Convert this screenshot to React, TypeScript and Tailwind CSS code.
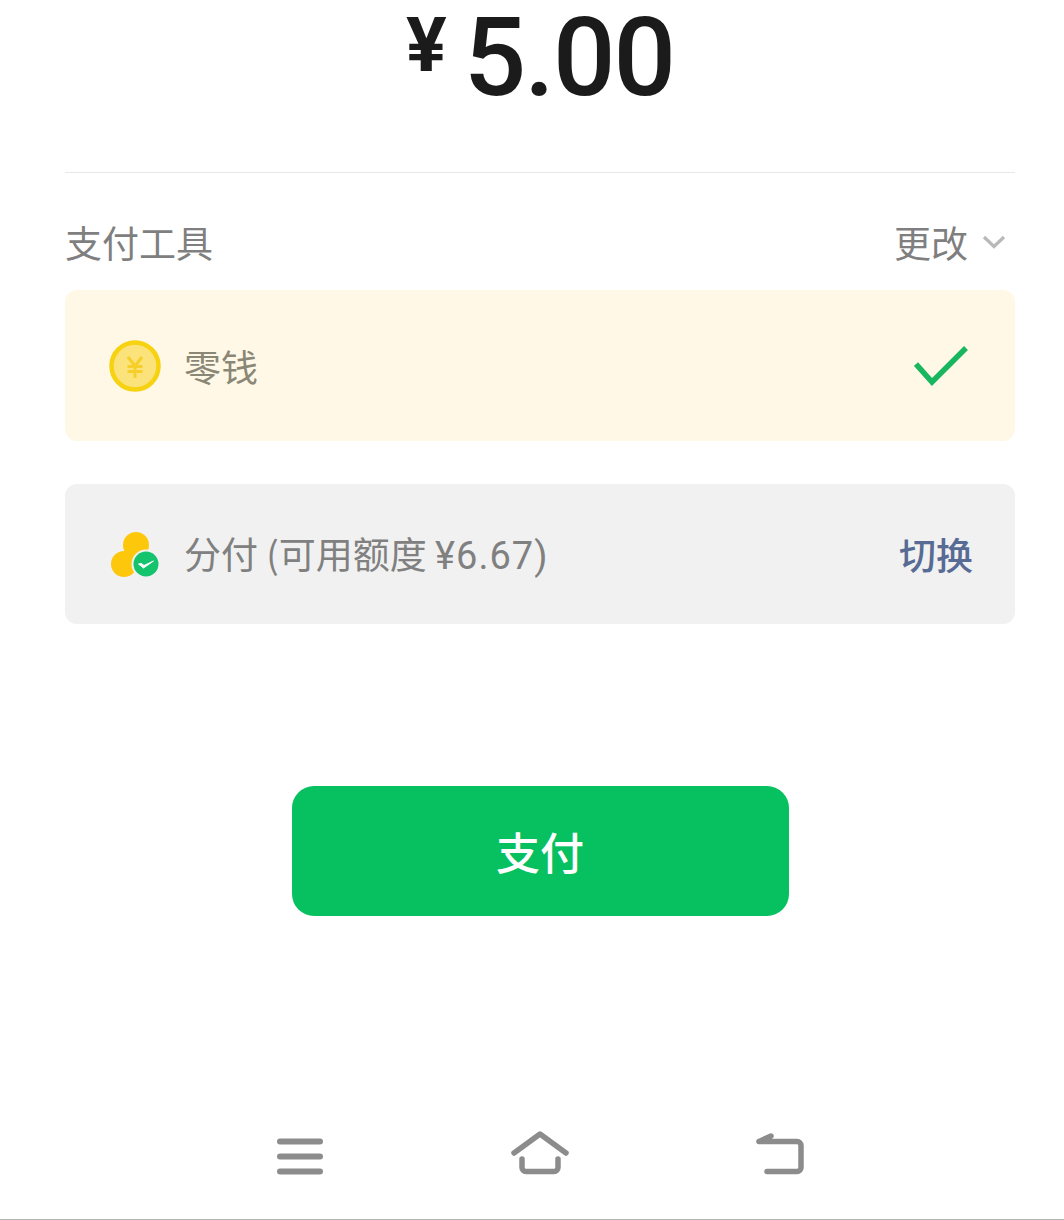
const cjk = "font-['Noto_Sans_CJK_SC','Noto_Sans',sans-serif]";

function CoinIcon() {
  return (
    <svg width="52" height="52" viewBox="0 0 52 52" className="shrink-0">
      <circle cx="26" cy="26" r="23.500" fill="#fbe27a" stroke="#f6d210" strokeWidth="4.500" />
      <path d="M19 17l7 9 7-9M18.500 26.500h15M18.500 31.500h15M26 26v12" fill="none" stroke="#f6cf2a" strokeWidth="3" />
    </svg>
  );
}

function FenfuIcon() {
  return (
    <svg width="48" height="46" viewBox="0 0 48 46" className="shrink-0">
      <circle cx="25" cy="14" r="13" fill="#fdc70c" />
      <circle cx="13" cy="33" r="13" fill="#fdc70c" />
      <circle cx="35" cy="33" r="14.500" fill="#f1f1f1" />
      <circle cx="35" cy="33" r="12.500" fill="#14c36c" />
      <path d="M27.500 33l5 4 10-7-9.500 4.500-2.500-2z" fill="#fff" stroke="#fff" strokeWidth="1" strokeLinejoin="round" />
    </svg>
  );
}

export default function App() {
  return (
    <div className={`${cjk} relative flex h-[1220px] w-[1064px] flex-col overflow-hidden border-b border-[#b4b4b4] bg-white pl-[16px]`}>
      {/* Amount */}
      <div className="flex h-[172px] items-start justify-center font-['Roboto',sans-serif] text-[#1b1b1b]">
        <span className="mr-[17px] mt-[5px] text-[76px] font-bold leading-[80px]">¥</span>
        <span className="text-[110px] font-medium leading-[116px] tracking-[-2px]">5.00</span>
      </div>

      <div className="mx-[49px] flex flex-col border-t border-[#e8e8e8]">
        {/* Label row */}
        <div className="flex h-[117px] items-center justify-between pt-[40px] pb-[20px] text-[37px] leading-[50px] text-[#7f7f7f]">
          <span>支付工具</span>
          <span className="flex items-center gap-[14px] pr-[9px]">
            更改
            <svg width="24" height="14" viewBox="0 0 24 14">
              <path d="M2 2l10 9.500L22 2" fill="none" stroke="#b9b9b9" strokeWidth="3.200" />
            </svg>
          </span>
        </div>

        {/* Balance */}
        <div className="flex h-[151px] items-center rounded-[12px] bg-[#fff8e6] pl-[44px] pr-[47px]">
          <CoinIcon />
          <span className="ml-[23px] pt-[2px] text-[37px] text-[#8a8777]">零钱</span>
          <svg width="54" height="40" viewBox="0 0 54 40" className="ml-auto">
            <path d="M2 18l16 18L52 2" fill="none" stroke="#18b65f" strokeWidth="5.500" />
          </svg>
        </div>

        {/* Fenfu */}
        <div className="mt-[43px] flex h-[140px] items-center rounded-[12px] bg-[#f1f1f1] pl-[46px] pr-[42px]">
          <FenfuIcon />
          <span className="ml-[25px] pt-[2px] text-[37px] text-[#808080]">
            分付 (可用额度 <span className="font-['Roboto',sans-serif] text-[38px] tracking-[1px]">¥6.67)</span>
          </span>
          <span className="ml-auto pt-[2px] text-[37px] font-medium text-[#576b95]">切换</span>
        </div>
      </div>

      {/* Pay */}
      <button className="mx-auto mt-[162px] h-[130px] w-[497px] rounded-[22px] bg-[#07c160] text-[44px] font-medium text-white">
        支付
      </button>

      {/* Android nav */}
      <div className="mt-auto mb-[43px] flex items-start pl-[261px]">
        <svg width="46" height="46" viewBox="0 0 46 46">
          <path d="M3 11.500h40M3 26.500h40M3 41.500h40" stroke="#8c8c8c" strokeWidth="6" strokeLinecap="round" />
        </svg>
        <svg width="60" height="46" viewBox="0 0 60 46" className="ml-[187px]">
          <path d="M4 23L30 4l26 19" fill="none" stroke="#8c8c8c" strokeWidth="5.500" strokeLinecap="round" strokeLinejoin="round" />
          <path d="M12 29v8.500a4 4 0 004 4h28a4 4 0 004-4V29" fill="none" stroke="#8c8c8c" strokeWidth="5.500" strokeLinecap="round" />
        </svg>
        <svg width="50" height="46" viewBox="0 0 50 46" className="ml-[185px]">
          <path d="M4 11.500h38a4 4 0 014 4v22a4 4 0 01-4 4H12M4 11.500L16 6" fill="none" stroke="#8c8c8c" strokeWidth="5.500" strokeLinecap="round" strokeLinejoin="round" />
        </svg>
      </div>
    </div>
  );
}
